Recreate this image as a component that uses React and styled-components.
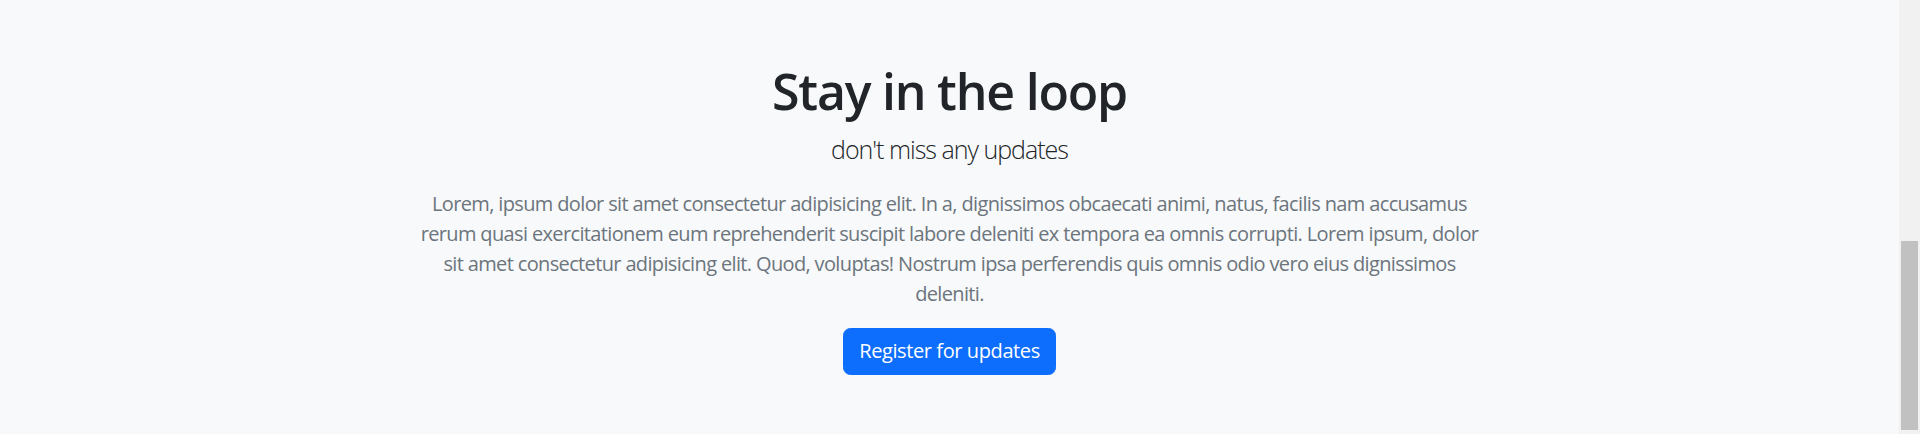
import React from 'react';
import styled, { createGlobalStyle } from 'styled-components';

const GlobalStyle = createGlobalStyle`
  body {
    margin: 0;
    background: #f8f9fa;
    font-family: "Open Sans", "Noto Sans", "Liberation Sans", sans-serif;
    color: #212529;
    overflow: hidden;
  }
`;

const Window = styled.div`
  display: flex;
  height: 434px;
`;

const Section = styled.section`
  flex: 1;
  background: #f8f9fa;
  padding: 61px 0 0;
  text-align: center;
`;

// browser scrollbar, page scrolled to the bottom
const ScrollTrack = styled.div`
  width: 21px;
  background: #f1f1f1;
  display: flex;
  flex-direction: column;
  justify-content: flex-end;
  padding: 0 2px 4px;
  box-sizing: border-box;
`;

const ScrollThumb = styled.div`
  height: 189px;
  background: #c1c1c1;
`;

const Container = styled.div`
  max-width: 1070px;
  margin: 0 auto;
  display: flex;
  flex-direction: column;
  align-items: center;
`;

const Title = styled.h1`
  margin: 0 0 10px;
  font-size: 50px;
  line-height: 60px;
  font-weight: 600;
  letter-spacing: -0.024em;
  color: #212529;
`;

const Lead = styled.p`
  margin: 0 0 20px;
  font-size: 25px;
  line-height: 37.5px;
  font-weight: 300;
  letter-spacing: -0.04em;
  color: #212529;
`;

const Text = styled.p`
  margin: 0 0 19px;
  font-size: 20px;
  line-height: 30px;
  letter-spacing: -0.032em;
  color: #6c757d;
`;

const Button = styled.button`
  font-family: inherit;
  font-size: 20px;
  line-height: 30px;
  letter-spacing: -0.02em;
  padding: 7.5px 15px;
  color: #fff;
  background: #0d6efd;
  border: 1px solid #0d6efd;
  border-radius: 7.5px;
  cursor: pointer;
`;

export default function App() {
  return (
    <>
      <GlobalStyle />
      <Window>
        <Section>
          <Container>
            <Title>Stay in the loop</Title>
            <Lead>don't miss any updates</Lead>
            <Text>
              Lorem, ipsum dolor sit amet consectetur adipisicing elit. In a, dignissimos obcaecati animi, natus,
              facilis nam accusamus rerum quasi exercitationem eum reprehenderit suscipit labore deleniti ex tempora
              ea omnis corrupti. Lorem ipsum, dolor sit amet consectetur adipisicing elit. Quod, voluptas! Nostrum
              ipsa perferendis quis omnis odio vero eius dignissimos deleniti.
            </Text>
            <Button>Register for updates</Button>
          </Container>
        </Section>
        <ScrollTrack>
          <ScrollThumb />
        </ScrollTrack>
      </Window>
    </>
  );
}
